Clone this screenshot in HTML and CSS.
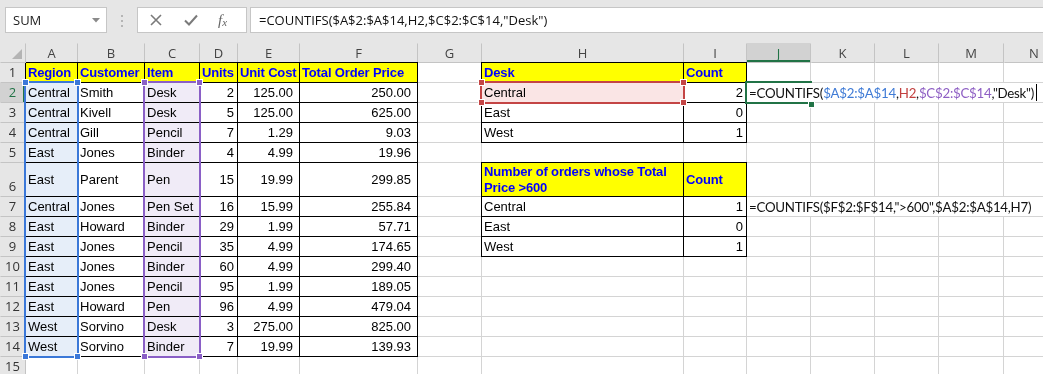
FILE: index.html
```html
<!DOCTYPE html>
<html lang="en">
<head>
  <meta charset="UTF-8">
  <title>COUNTIFS</title>
  <link rel="stylesheet" href="styles.css">
</head>
<body>
  <div class="toolbar">
    <div class="namebox">
      <span>SUM</span>
      <svg width="8" height="5" viewBox="0 0 8 5"><path d="M0 0h8L4 4.5z" fill="#8a8a8a"/></svg>
    </div>
    <div class="grip"><i></i><i></i><i></i></div>
    <div class="fnbox">
      <svg class="ico" width="12" height="12" viewBox="0 0 12 12"><path d="M1 1l10 10M11 1L1 11" stroke="#7a7a7a" stroke-width="1.6" fill="none"/></svg>
      <svg class="ico" width="14" height="12" viewBox="0 0 14 12"><path d="M1 6.5l4 4L13 1.5" stroke="#7a7a7a" stroke-width="2" fill="none"/></svg>
      <span class="fx">f<sub>x</sub></span>
    </div>
    <div class="formula">=COUNTIFS($A$2:$A$14,H2,$C$2:$C$14,"Desk")</div>
  </div>

  <div class="sheet" id="sheet"></div>

  <script>
    const sheet = document.getElementById('sheet');
    const cols = 'ABCDEFGHIJKLMN'.split('');

    const left = [
      ['Region', 'Customer', 'Item', 'Units', 'Unit Cost', 'Total Order Price'],
      ['Central', 'Smith', 'Desk', 2, '125.00', '250.00'],
      ['Central', 'Kivell', 'Desk', 5, '125.00', '625.00'],
      ['Central', 'Gill', 'Pencil', 7, '1.29', '9.03'],
      ['East', 'Jones', 'Binder', 4, '4.99', '19.96'],
      ['East', 'Parent', 'Pen', 15, '19.99', '299.85'],
      ['Central', 'Jones', 'Pen Set', 16, '15.99', '255.84'],
      ['East', 'Howard', 'Binder', 29, '1.99', '57.71'],
      ['East', 'Jones', 'Pencil', 35, '4.99', '174.65'],
      ['East', 'Jones', 'Binder', 60, '4.99', '299.40'],
      ['East', 'Jones', 'Pencil', 95, '1.99', '189.05'],
      ['East', 'Howard', 'Pen', 96, '4.99', '479.04'],
      ['West', 'Sorvino', 'Desk', 3, '275.00', '825.00'],
      ['West', 'Sorvino', 'Binder', 7, '19.99', '139.93']
    ];

    const right = {
      1: ['Desk', 'Count', true],
      2: ['Central', 2], 3: ['East', 0], 4: ['West', 1],
      6: ['Number of orders whose Total Price >600', 'Count', true],
      7: ['Central', 1], 8: ['East', 0], 9: ['West', 1]
    };

    const formulas = {
      2: '=COUNTIFS(<span class="fb">$A$2:$A$14</span>,<span class="fr">H2</span>,<span class="fp">$C$2:$C$14</span>,"Desk")<i class="cursor"></i>',
      7: '=COUNTIFS($F$2:$F$14,"&gt;600",$A$2:$A$14,H7)'
    };

    function add(text, cls, html) {
      const d = document.createElement('div');
      d.className = 'c ' + cls;
      if (html) d.innerHTML = html;
      else d.textContent = text;
      sheet.appendChild(d);
      return d;
    }

    // column headers
    add('', 'hd corner');
    cols.forEach(c => add(c, 'hd' + (c === 'J' ? ' sel' : '')));

    for (let r = 1; r <= 15; r++) {
      add(r, 'hd rh' + (r === 2 ? ' sel' : ''));

      const row = left[r - 1];
      for (let i = 0; i < 6; i++) {
        if (!row) { add('', ''); continue; }
        let cls = 'b';
        if (r === 1) cls += ' hd1';
        else if (i >= 3) cls += ' num' + (i >= 4 ? ' dec' : '');
        add(row[i], cls);
      }

      add('', ''); // G

      const rr = right[r];
      if (rr) {
        const head = rr[2];
        add(rr[0], 'b' + (head ? ' hd1 wrap' : ''));
        add(rr[1], 'b' + (head ? ' hd1' : ' num'));
      } else {
        add('', '');
        add('', '');
      }

      if (formulas[r]) {
        add('', 'fxc', formulas[r]);
      } else {
        for (let i = 0; i < 5; i++) add('', '');
      }
    }

    // range highlights of the formula being edited
    const ranges = [
      ['area-a blue', ['tl', 'tr', 'bl', 'br']],
      ['area-c purple', ['tl', 'tr', 'bl', 'br']],
      ['area-h red', ['tl', 'tr', 'bl', 'br']],
      ['area-j green', ['br']]
    ];
    ranges.forEach(([cls, handles]) => {
      if (!cls.includes('green')) {
        const fill = document.createElement('div');
        fill.className = 'fill ' + cls;
        sheet.appendChild(fill);
      }
      const box = document.createElement('div');
      box.className = 'rng ' + cls;
      handles.forEach(h => {
        const i = document.createElement('i');
        i.className = h;
        box.appendChild(i);
      });
      sheet.appendChild(box);
    });
  </script>
</body>
</html>
```

FILE: styles.css
```css
:root {
  --grid: #d4d4d4;
  --head: #e6e6e6;
  --excel-green: #217346;
  --blue: #3b78d8;
  --purple: #8a5fc6;
  --red: #c44545;
}
* { box-sizing: border-box; margin: 0; padding: 0; }
body {
  background: var(--head);
  width: 1043px;
  height: 374px;
  overflow: hidden;
  font-family: "Liberation Sans", Arial, sans-serif;
}

/* formula bar */
.toolbar {
  display: flex;
  align-items: flex-start;
  height: 43px;
  padding: 7px 0 0 5px;
}
.namebox,
.fnbox,
.formula {
  height: 26px;
  background: #fff;
  border: 1px solid #c6c6c6;
  display: flex;
  align-items: center;
}
.namebox {
  width: 102px;
  justify-content: space-between;
  padding: 0 6px 0 7px;
  font: 13px "Open Sans", sans-serif;
  color: #222;
}
.grip {
  display: flex;
  flex-direction: column;
  gap: 3px;
  margin: 8px 0 0 14px;
}
.grip i {
  width: 2px;
  height: 2px;
  background: #b5b5b5;
}
.fnbox {
  width: 110px;
  margin-left: 14px;
  padding-left: 12px;
  gap: 22px;
}
.fx {
  font: italic 15px "Liberation Serif", serif;
  color: #666;
  margin-left: -2px;
}
.fx sub {
  font-size: 11px;
  vertical-align: -1px;
}
.formula {
  flex: 1;
  margin: 0 -2px 0 3px;
  padding-left: 8px;
  font: 13px "Open Sans", sans-serif;
  color: #111;
}

/* sheet */
.sheet {
  display: grid;
  grid-template-columns: 25px 51px 66px 54px 37px 61px 117px 63px 201px 62px 63px 63px 63px 64px 60px;
  grid-template-rows: repeat(6, 19px) 33px repeat(9, 19px);
  gap: 1px;
  background: var(--grid);
  position: relative;
  width: max-content;
}
.c {
  background: #fff;
  font-size: 13px;
  color: #000;
  display: flex;
  align-items: center;
  padding: 0 2px;
  white-space: nowrap;
  overflow: hidden;
}
.c.b { box-shadow: 0 0 0 1px #000; }
.hd1 {
  background: #ff0;
  color: #00f;
  font-weight: bold;
  padding-left: 2px;
  letter-spacing: -0.15px;
}
.num { justify-content: flex-end; padding-right: 3px; }
.dec { padding-right: 6px; }
.wrap {
  white-space: normal;
  line-height: 16px;
}

.hd {
  background: var(--head);
  color: #444;
  font: 13px "Open Sans", sans-serif;
  justify-content: center;
  box-shadow: 1px 1px 0 #c4c4c4;
}
.rh {
  align-items: flex-end;
  line-height: 17px;
  padding-bottom: 1px;
  color: #333;
}
.hd.sel {
  background: #d2d2d2;
  color: var(--excel-green);
  box-shadow: inset 0 -2px 0 var(--excel-green), 1px 1px 0 #c4c4c4;
}
.rh.sel {
  box-shadow: inset -2px 0 0 var(--excel-green), 1px 1px 0 #c4c4c4;
}
.corner { position: relative; }
.corner::after {
  content: '';
  position: absolute;
  right: 3px;
  bottom: 3px;
  border-style: solid;
  border-width: 0 0 10px 10px;
  border-color: transparent transparent #b4b4b4 transparent;
}

/* cells showing formulas */
.fxc {
  grid-column: span 5;
  position: relative;
  z-index: 1;
  font: 13.3px Lato, sans-serif;
  letter-spacing: -0.25px;
  color: #111;
  padding-left: 2px;
}
.fb { color: #3f7bd6; }
.fr { color: #c3403f; }
.fp { color: #8e5fc4; }
.cursor {
  display: inline-block;
  width: 1px;
  height: 17px;
  background: #000;
  margin-left: 2px;
}

/* range highlights */
.fill {
  position: absolute;
  inset: 0;
  mix-blend-mode: multiply;
}
.rng {
  position: absolute;
  inset: -2px;
  border: 2px solid currentColor;
}
.rng i {
  position: absolute;
  width: 7px;
  height: 7px;
  background: currentColor;
  border: 1px solid #fff;
  z-index: 2;
}
.rng .tl { left: -4px; top: -4px; }
.rng .tr { right: -4px; top: -4px; }
.rng .bl { left: -4px; bottom: -4px; }
.rng .br { right: -4px; bottom: -4px; }

.area-a { grid-column: 2 / 3; grid-row: 3 / 16; }
.area-c { grid-column: 4 / 5; grid-row: 3 / 16; }
.area-h { grid-column: 9 / 10; grid-row: 3 / 4; }
.area-j { grid-column: 11 / 12; grid-row: 3 / 4; }

.blue { color: var(--blue); }
.purple { color: var(--purple); }
.red { color: var(--red); }
.green { color: var(--excel-green); }
.fill.blue { background: #e6eef9; }
.fill.purple { background: #f0ebf7; }
.fill.red { background: #fae5e5; }
.rng.green .br { right: -5px; bottom: -6px; }
```
